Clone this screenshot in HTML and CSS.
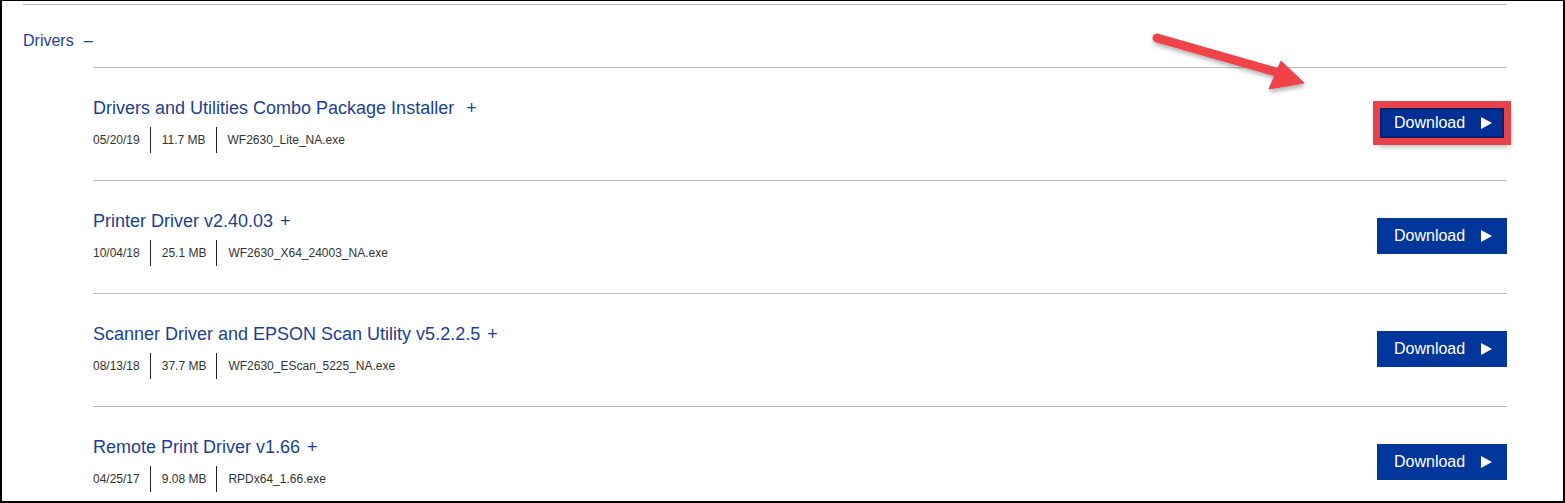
FILE: index.html
```html
<!DOCTYPE html>
<html>
<head lang="en">
    <meta charset="UTF-8">
    <title>Drivers</title>
    <link rel="stylesheet" href="styles.css">
</head>
<body>
    <div id="frame">
        <div id="section">
            <div class="section-head">Drivers<span class="minus">&ndash;</span></div>
            <ul id="list">
                <li class="item">
                    <div class="info">
                        <div class="title">Drivers and Utilities Combo Package Installer<span class="plus wide">+</span></div>
                        <div class="meta">
                            <span>05/20/19</span>
                            <span>11.7 MB</span>
                            <span>WF2630_Lite_NA.exe</span>
                        </div>
                    </div>
                    <a class="btn hl" href="#">Download<span class="tri"></span></a>
                </li>
                <li class="item">
                    <div class="info">
                        <div class="title">Printer Driver v2.40.03<span class="plus">+</span></div>
                        <div class="meta">
                            <span>10/04/18</span>
                            <span>25.1 MB</span>
                            <span>WF2630_X64_24003_NA.exe</span>
                        </div>
                    </div>
                    <a class="btn" href="#">Download<span class="tri"></span></a>
                </li>
                <li class="item">
                    <div class="info">
                        <div class="title">Scanner Driver and EPSON Scan Utility v5.2.2.5<span class="plus">+</span></div>
                        <div class="meta">
                            <span>08/13/18</span>
                            <span>37.7 MB</span>
                            <span>WF2630_EScan_5225_NA.exe</span>
                        </div>
                    </div>
                    <a class="btn" href="#">Download<span class="tri"></span></a>
                </li>
                <li class="item">
                    <div class="info">
                        <div class="title">Remote Print Driver v1.66<span class="plus">+</span></div>
                        <div class="meta">
                            <span>04/25/17</span>
                            <span>9.08 MB</span>
                            <span>RPDx64_1.66.exe</span>
                        </div>
                    </div>
                    <a class="btn" href="#">Download<span class="tri"></span></a>
                </li>
            </ul>
        </div>

        <!-- callout arrow -->
        <svg id="arrow" width="1565" height="503" viewBox="0 0 1565 503">
            <defs>
                <filter id="sh" x="-20%" y="-50%" width="140%" height="200%">
                    <feDropShadow dx="1" dy="3" stdDeviation="2" flood-color="#000" flood-opacity="0.3"/>
                </filter>
            </defs>
            <g filter="url(#sh)" fill="#ef4248" stroke="#ef4248">
                <line x1="1157" y1="38" x2="1276" y2="72" stroke-width="9" stroke-linecap="round"/>
                <polygon points="1281,61 1304,83 1269,89" stroke-width="1" stroke-linejoin="round"/>
            </g>
        </svg>
    </div>
</body>
</html>
```

FILE: styles.css
```css
*{
    padding: 0;
    margin: 0;
    box-sizing: border-box;
}
ul{
    list-style: none;
}
a{
    text-decoration: none;
}
body{
    font-family: "Liberation Sans", Arial, sans-serif;
    background: #fff;
}
#frame{
    width: 1565px;
    height: 503px;
    border: 2px solid #000;
    border-top-width: 1px;
    position: relative;
    overflow: hidden;
}
#section{
    width: 1484px;
    margin: 3px 0 0 21px;
    border-top: 1px solid #b9b9b9;
}
.section-head{
    padding: 26px 0 16px;
    font-size: 16px;
    line-height: 20px;
    color: #1d3f8f;
}
.minus{
    margin-left: 10px;
}
#list{
    margin-left: 70px;
}
.item{
    display: flex;
    align-items: center;
    justify-content: space-between;
    border-top: 1px solid #bdbdbd;
    padding: 28px 0 27px;
}
.title{
    font-size: 18px;
    line-height: 24px;
    color: #1d3f8f;
}
.plus{
    margin-left: 7px;
}
.plus.wide{
    margin-left: 12px;
}
.meta{
    display: flex;
    margin-top: 7px;
    font-size: 12px;
    color: #333;
}
.meta span{
    height: 26px;
    line-height: 26px;
    padding: 0 10px 0 11px;
    border-left: 1px solid #222;
}
.meta span:first-child{
    padding-left: 0;
    border-left: none;
}
.btn{
    display: flex;
    align-items: center;
    justify-content: space-between;
    width: 130px;
    height: 36px;
    margin-bottom: 3px;
    padding: 0 15px 0 17px;
    background: #01369b;
    color: #fff;
    font-size: 16px;
}
.tri{
    width: 0;
    height: 0;
    border-top: 6px solid transparent;
    border-bottom: 6px solid transparent;
    border-left: 11px solid #fff;
}
.btn.hl{
    background: #012f94;
    box-shadow: inset 0 0 0 3px #e8434a, inset 0 0 0 5px #0b1f6b, 0 0 0 4px #e8434a, 2px 5px 6px rgba(0,0,0,0.35);
}
#arrow{
    position: absolute;
    left: -2px;
    top: -1px;
    pointer-events: none;
}
```
